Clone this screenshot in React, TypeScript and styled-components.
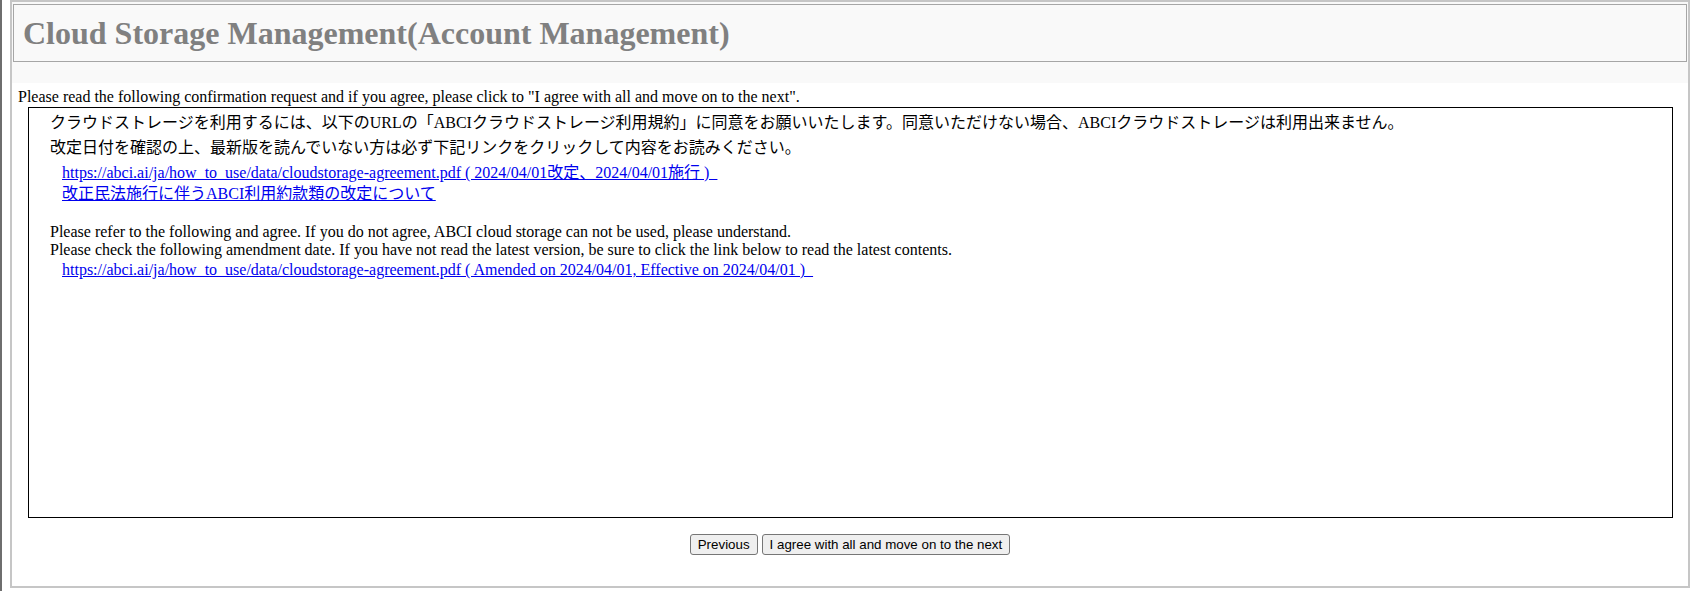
import React from 'react'
import styled, { createGlobalStyle } from 'styled-components'

const AGREEMENT_URL = 'https://abci.ai/ja/how_to_use/data/cloudstorage-agreement.pdf'

const GlobalStyle = createGlobalStyle`
  html, body {
    margin: 0;
    padding: 0;
    background: #ffffff;
  }
  body {
    font-family: "Liberation Serif", "Noto Sans CJK JP", serif;
    font-size: 16px;
    color: #000000;
  }
`

function App() {
  return (
    <>
      <GlobalStyle />
      <ScPage>
        <ScSideStrip />
        <ScFrame>
          <ScHeaderArea>
            <ScHeaderBox>
              <ScTitle>Cloud Storage Management(Account Management)</ScTitle>
            </ScHeaderBox>
          </ScHeaderArea>

          <ScIntro>
            Please read the following confirmation request and if you agree, please click to "I agree with all and move on to the next".
          </ScIntro>

          <ScAgreementBox>
            <ScJaLine>
              クラウドストレージを利用するには、以下のURLの「ABCIクラウドストレージ利用規約」に同意をお願いいたします。同意いただけない場合、ABCIクラウドストレージは利用出来ません。
            </ScJaLine>
            <ScJaLine>
              改定日付を確認の上、最新版を読んでいない方は必ず下記リンクをクリックして内容をお読みください。
            </ScJaLine>
            <ScLinkList $top={2}>
              <ScLinkLine>
                <ScLink href={AGREEMENT_URL}>
                  {AGREEMENT_URL} ( 2024/04/01改定、2024/04/01施行 )&nbsp;&nbsp;
                </ScLink>
              </ScLinkLine>
              <ScLinkLine>
                <ScLink href="#">改正民法施行に伴うABCI利用約款類の改定について</ScLink>
              </ScLinkLine>
            </ScLinkList>

            <ScSpacer />

            <ScEnLine>
              Please refer to the following and agree. If you do not agree, ABCI cloud storage can not be used, please understand.
            </ScEnLine>
            <ScEnLine>
              Please check the following amendment date. If you have not read the latest version, be sure to click the link below to read the latest contents.
            </ScEnLine>
            <ScLinkList $top={0}>
              <ScLinkLine>
                <ScLink href={AGREEMENT_URL}>
                  {AGREEMENT_URL} ( Amended on 2024/04/01, Effective on 2024/04/01 )&nbsp;&nbsp;
                </ScLink>
              </ScLinkLine>
            </ScLinkList>
          </ScAgreementBox>

          <ScButtonRow>
            <ScButton type="button">Previous</ScButton>
            <ScButton type="button">I agree with all and move on to the next</ScButton>
          </ScButtonRow>
        </ScFrame>
      </ScPage>
    </>
  )
}

const ScPage = styled.div`
  display: flex;
  height: 591px;
  overflow: hidden;
`

// left frame edge
const ScSideStrip = styled.div`
  width: 2px;
  flex-shrink: 0;
  background-color: #6e6e6e;
`

const ScFrame = styled.div`
  flex: 1;
  margin-left: 8px;
  height: 588px;
  box-sizing: border-box;
  border: 2px solid #c6c6c6;
  display: flex;
  flex-direction: column;
`

const ScHeaderArea = styled.div`
  background-color: #f9f9f9;
  padding: 2px 1px 21px 1px;
`

const ScHeaderBox = styled.div`
  height: 58px;
  box-sizing: border-box;
  border: 1px solid #a6a6a6;
  display: flex;
  align-items: center;
  padding-left: 9px;
`

const ScTitle = styled.h1`
  margin: 0;
  font-family: "Liberation Serif", serif;
  font-size: 32px;
  font-weight: bold;
  color: #808080;
  line-height: 36px;
`

const ScIntro = styled.div`
  margin: 5px 0 1px;
  padding-left: 6px;
  line-height: 18px;
`

const ScAgreementBox = styled.div`
  margin: 0 15px 0 16px;
  height: 411px;
  box-sizing: border-box;
  border: 1px solid #000000;
  padding: 2px 22px 0 21px;
`

const ScJaLine = styled.div`
  line-height: 25px;
`

const ScLinkList = styled.div<{ $top: number }>`
  margin-top: ${p => p.$top}px;
  padding-left: 12px;
`

const ScLinkLine = styled.div`
  line-height: 21px;
`

const ScLink = styled.a`
  color: #0000ee;
  text-decoration: underline;
`

const ScEnLine = styled.div`
  line-height: 18px;
`

const ScSpacer = styled.div`
  height: 19px;
`

const ScButtonRow = styled.div`
  display: flex;
  justify-content: center;
  gap: 4px;
  margin-top: 16px;
`

const ScButton = styled.button`
  height: 21px;
  box-sizing: border-box;
  padding: 0 7px;
  font-family: "Liberation Sans", Arial, sans-serif;
  font-size: 13.33px;
  color: #000000;
  background-color: #efefef;
  border: 1px solid #767676;
  border-radius: 3px;
  cursor: pointer;
`

export default App
